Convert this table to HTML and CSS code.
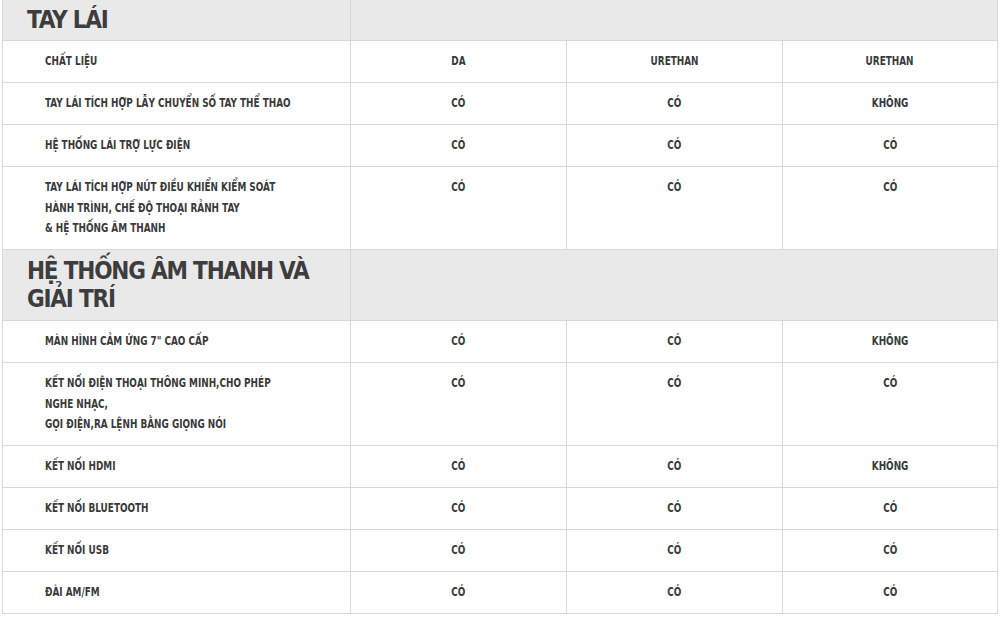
FILE: index.html
```html
<!DOCTYPE html>
<html lang="vi">
<head>
<meta charset="utf-8">
<title>Thông số</title>
<link rel="stylesheet" href="styles.css">
</head>
<body>
<table class="spec">
  <colgroup>
    <col class="c1"><col class="c2"><col class="c3"><col class="c4">
  </colgroup>
  <tr class="group g1">
    <th class="gtitle">TAY LÁI</th>
    <th class="gfill" colspan="3"></th>
  </tr>
  <tr><td class="lbl"><span class="t">CHẤT LIỆU</span></td><td><span class="t">DA</span></td><td><span class="t">URETHAN</span></td><td><span class="t">URETHAN</span></td></tr>
  <tr><td class="lbl"><span class="t">TAY LÁI TÍCH HỢP LẪY CHUYỂN SỐ TAY THỂ THAO</span></td><td><span class="t">CÓ</span></td><td><span class="t">CÓ</span></td><td><span class="t">KHÔNG</span></td></tr>
  <tr><td class="lbl"><span class="t">HỆ THỐNG LÁI TRỢ LỰC ĐIỆN</span></td><td><span class="t">CÓ</span></td><td><span class="t">CÓ</span></td><td><span class="t">CÓ</span></td></tr>
  <tr><td class="lbl"><span class="t">TAY LÁI TÍCH HỢP NÚT ĐIỀU KHIỂN KIỂM SOÁT<br>HÀNH TRÌNH, CHẾ ĐỘ THOẠI RẢNH TAY<br>&amp; HỆ THỐNG ÂM THANH</span></td><td><span class="t">CÓ</span></td><td><span class="t">CÓ</span></td><td><span class="t">CÓ</span></td></tr>
  <tr class="group g2">
    <th class="gtitle">HỆ THỐNG ÂM THANH VÀ<br>GIẢI TRÍ</th>
    <th class="gfill" colspan="3"></th>
  </tr>
  <tr><td class="lbl"><span class="t">MÀN HÌNH CẢM ỨNG 7" CAO CẤP</span></td><td><span class="t">CÓ</span></td><td><span class="t">CÓ</span></td><td><span class="t">KHÔNG</span></td></tr>
  <tr><td class="lbl"><span class="t">KẾT NỐI ĐIỆN THOẠI THÔNG MINH,CHO PHÉP<br>NGHE NHẠC,<br>GỌI ĐIỆN,RA LỆNH BẰNG GIỌNG NÓI</span></td><td><span class="t">CÓ</span></td><td><span class="t">CÓ</span></td><td><span class="t">CÓ</span></td></tr>
  <tr><td class="lbl"><span class="t">KẾT NỐI HDMI</span></td><td><span class="t">CÓ</span></td><td><span class="t">CÓ</span></td><td><span class="t">KHÔNG</span></td></tr>
  <tr><td class="lbl"><span class="t">KẾT NỐI BLUETOOTH</span></td><td><span class="t">CÓ</span></td><td><span class="t">CÓ</span></td><td><span class="t">CÓ</span></td></tr>
  <tr><td class="lbl"><span class="t">KẾT NỐI USB</span></td><td><span class="t">CÓ</span></td><td><span class="t">CÓ</span></td><td><span class="t">CÓ</span></td></tr>
  <tr><td class="lbl"><span class="t">ĐÀI AM/FM</span></td><td><span class="t">CÓ</span></td><td><span class="t">CÓ</span></td><td><span class="t">CÓ</span></td></tr>
</table>
</body>
</html>
```
FILE: styles.css
```css
html, body {
  margin: 0;
  padding: 0;
  background: #ffffff;
}
.spec {
  margin: 0 0 0 2px;
  width: 995px;
  border-collapse: collapse;
  table-layout: fixed;
  font-family: "DejaVu Sans Condensed", "Liberation Sans", sans-serif;
  font-stretch: condensed;
  color: #3a3a3a;
}
.c1 { width: 348px; }
.c2 { width: 216px; }
.c3 { width: 216px; }
.c4 { width: 215px; }
.spec td, .spec th {
  border: 1px solid #d9d9d9;
}
.spec td {
  padding: 10px 4px 10.5px 4px;
  line-height: 20.5px;
  font-size: 13px;
  font-weight: bold;
  text-align: center;
  vertical-align: top;
  white-space: nowrap;
}
.spec td.lbl {
  text-align: left;
  padding-left: 42px;
}
.t {
  display: inline-block;
  transform: scaleX(0.76);
  transform-origin: center top;
}
.lbl .t {
  transform-origin: left top;
}
.group th {
  background: #e9e9e9;
  text-align: left;
  vertical-align: top;
  font-family: "DejaVu Sans", "Liberation Sans", sans-serif;
  font-weight: bold;
  font-size: 24px;
  letter-spacing: -1.2px;
  color: #3d3d3d;
  white-space: nowrap;
}
.gtitle {
  padding: 7px 4px 7px 24px;
  line-height: 26px;
}
.g2 .gtitle {
  padding: 7px 4px 7px 24px;
  line-height: 28px;
}
.g1 th {
  border-top: none;
}
```
